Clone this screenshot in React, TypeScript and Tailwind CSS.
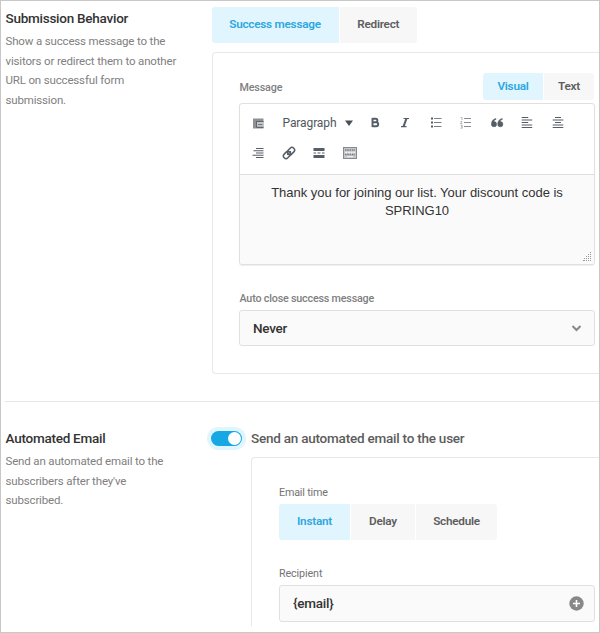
import type { ReactNode } from "react";

function Tabs({ items, className = "" }: { items: { label: string; width: string }[]; className?: string }) {
  return (
    <div className={`flex gap-px overflow-hidden rounded-[3px] text-[11.75px] font-semibold tracking-[-0.25px] ${className}`}>
      {items.map((t, i) => (
        <button
          key={t.label}
          className={`${t.width} h-full whitespace-nowrap ${i === 0 ? "bg-[#e1f5fe] text-[#2fa7e0]" : "bg-[#f7f7f7] text-[#5e5e5e]"}`}
        >
          {t.label}
        </button>
      ))}
    </div>
  );
}

function Intro({ title, lines }: { title: string; lines: string[] }) {
  return (
    <div className="w-[206px] shrink-0 pt-px pl-[4.5px]">
      <h2 className="h-[20px] text-[13.5px] leading-[20px] font-medium tracking-[-0.25px] whitespace-nowrap text-[#333]">{title}</h2>
      <p className="mt-[4px] text-[11.5px] leading-[19.7px] tracking-[-0.16px] whitespace-nowrap text-[#808080]">
        {lines.map((l) => (
          <span key={l} className="block">{l}</span>
        ))}
      </p>
    </div>
  );
}

function Icon({ children }: { children: ReactNode }) {
  return (
    <span className="flex h-[30px] w-[30.5px] items-center justify-center">
      <svg width="14" height="14" viewBox="0 0 14 14" fill="none" stroke="#555d66" strokeWidth="1.3">
        {children}
      </svg>
    </span>
  );
}

function Editor() {
  return (
    <div className="mt-[3px] flex h-[162px] w-[356px] flex-col rounded-[3px] border border-[#e0e0e0] shadow-[0_1px_1px_#eee]">
      <div className="h-[71px] border-b border-[#dedede] pt-[4px] pl-[3px]">
        <div className="flex">
          <Icon>
            <path d="M2 2.500h10.500v10H2z" fill="#8d9095" stroke="none" />
            <path d="M6 6h6.500v4.500H6z" fill="#c4c6c8" stroke="none" />
            <path d="M5.500 5v6.500h7M5.500 5.500h7" stroke="#62666c" strokeWidth="1" />
            <path d="M7 8.500h4.500" stroke="#777b80" strokeWidth="1" />
          </Icon>
          <div className="mr-[3px] ml-[3px] flex h-[30px] w-[80px] items-center justify-between pr-[4px] pl-[6px] text-[12px] tracking-[-0.1px] text-[#50575e]">
            <span>Paragraph</span>
            <svg width="8" height="6" viewBox="0 0 8 6"><path d="M0 .5h8L4 6z" fill="#4a5058" /></svg>
          </div>
          <Icon><path d="M4.500 2v9M4.500 2.800h3.200a1.600 1.600 0 0 1 0 3.400H4.500M4.500 6.300h3.700a2 2 0 0 1 0 4H4.500" strokeWidth="1.900" /></Icon>
          <Icon><path d="M5.500 2.500h5.500M3 10.700h5.500" strokeWidth="1.200" /><path d="M8.500 2.500l-3 8.200" strokeWidth="2" /></Icon>
          <Icon><path d="M5 2.500h7.500M5 6.500h7.500M5 10.500h7.500" stroke="#7b8087" strokeWidth="1" /><path d="M2 2.500h2M2 6.500h2M2 10.500h2" strokeWidth="2" /></Icon>
          <Icon><path d="M5 2.500h7M5 6.500h7M5 10.500h7" stroke="#8a8e94" strokeWidth="1" /><path d="M1.700 1.500h1.300v2.500M1.500 5.500h1.500L1.500 7.500H3.300M1.500 9.200h1.700v3H1.500M2 10.700h1" stroke="#a0a3a8" strokeWidth=".8" /></Icon>
          <Icon><path d="M6 2.500C3 3 1.400 5.200 1.400 8.200a2.600 2.600 0 1 0 2.600-2.600C4 4.500 4.700 3.700 6 3.500zM12.300 2.500C9.300 3 7.700 5.200 7.700 8.200a2.600 2.600 0 1 0 2.600-2.600C10.300 4.500 11 3.700 12.300 3.500z" fill="#555d66" stroke="#555d66" strokeWidth=".5" /></Icon>
          <Icon><path d="M1.700 1.500h6.500M1.700 4h10.500M1.700 6.500h6.500M1.700 9h10.500M1.700 11.500h10.500" strokeWidth="1.200" /></Icon>
          <Icon><path d="M4 1.500h6M1.700 4h10.600M4 6.500h6M1.700 9h10.600M1.700 11.500h10.600" strokeWidth="1.200" /></Icon>
        </div>
        <div className="flex">
          <Icon><path d="M5 2.500h7.500M2.500 4.700h10M5 7h7.500M1.500 9.200h11M5 11.500h7.500" strokeWidth="1.150" /></Icon>
          <Icon>
            <g transform="rotate(-45 7 7)">
              <rect x=".2" y="4.400" width="8" height="5.200" rx="2.600" strokeWidth="1.500" />
              <rect x="5.800" y="4.400" width="8" height="5.200" rx="2.600" strokeWidth="1.500" />
              <path d="M4.500 7h5" />
            </g>
          </Icon>
          <Icon>
            <path d="M1.500 3.500h11M1.500 10.500h11" strokeWidth="3.200" />
            <path d="M1.500 7h2.500M5.500 7h3M10 7h2.500" strokeWidth="1.200" />
          </Icon>
          <Icon>
            <rect x=".5" y="1.500" width="13" height="11" fill="#c6c8cb" stroke="#858990" strokeWidth="1" />
            <path d="M2 4h10" stroke="#777c83" strokeDasharray="1.500 .8" />
            <path d="M2 6.500h10" strokeDasharray="2 .8" stroke="#f3f3f3" />
            <path d="M2 8.500h10" stroke="#777c83" strokeDasharray="1.500 .8" />
            <path d="M4 10.700h6" stroke="#fff" strokeWidth=".8" />
          </Icon>
        </div>
      </div>
      <div className="relative flex-1 rounded-b-[3px] bg-[#fafafa] pt-[9px] text-center font-['Liberation_Sans',Arial,sans-serif] text-[13px] leading-[18px] tracking-[-0.02px] text-[#333]">
        <p className="whitespace-nowrap">Thank you for joining our list. Your discount code is</p>
        <p>SPRING10</p>
        <svg className="absolute right-[2px] bottom-[3px]" width="9" height="9" viewBox="0 0 9 9" fill="#999">
          <path d="M7 0h1v1h-1zM5 2h1v1h-1zM7 2h1v1h-1zM3 4h1v1h-1zM5 4h1v1h-1zM7 4h1v1h-1zM1 6h1v1h-1zM3 6h1v1h-1zM5 6h1v1h-1zM7 6h1v1h-1zM0 8h1v1h-1zM1 8h1v1h-1zM3 8h1v1h-1zM5 8h1v1h-1zM7 8h1v1h-1z" />
        </svg>
      </div>
    </div>
  );
}

export default function App() {
  return (
    <main className="h-[633px] w-[600px] overflow-hidden border border-[#c8c8c8] bg-white font-[Roboto,sans-serif]">
      <section className="flex h-[400px] pt-[6px]">
        <Intro
          title="Submission Behavior"
          lines={[
            "Show a success message to the",
            "visitors or redirect them to another",
            "URL on successful form",
            "submission.",
          ]}
        />
        <div className="flex-1 pl-[4.5px]">
          <Tabs className="h-[36px] w-[205.5px]" items={[{ label: "Success message", width: "w-[127px]" }, { label: "Redirect", width: "flex-1" }]} />
          <div className="mt-[9px] h-[322px] rounded-l-[4px] border border-r-0 border-[#e8e8e8] pt-[20px] pl-[26.5px]">
            <div className="flex h-[27px] w-[355px] items-center justify-between">
              <label className="mt-[3px] pl-[0.5px] text-[10.75px] font-medium tracking-[-0.15px] text-[#808080]">Message</label>
              <Tabs className="h-[27px] w-[111px]" items={[{ label: "Visual", width: "w-[60px]" }, { label: "Text", width: "flex-1" }]} />
            </div>
            <Editor />
            <label className="mt-[26px] block h-[16px] pl-[0.5px] text-[10.75px] leading-[16px] font-medium tracking-[-0.2px] text-[#808080]">Auto close success message</label>
            <div className="mt-[3px] flex h-[36px] w-[356px] items-center justify-between rounded-[3px] border border-[#e0e0e0] bg-[#fafafa] pr-[12px] pl-[13px] text-[13.5px] font-medium tracking-[-0.25px] text-[#333]">
              <span>Never</span>
              <svg width="11" height="8" viewBox="0 0 11 8"><path d="M1.500 2l4 4 4-4" fill="none" stroke="#888" strokeWidth="2" /></svg>
            </div>
          </div>
        </div>
      </section>
      <hr className="ml-[4px] border-[#e6e6e6]" />
      <section className="flex h-[224px] pt-[25px]">
        <Intro
          title="Automated Email"
          lines={["Send an automated email to the", "subscribers after they've", "subscribed."]}
        />
        <div className="flex-1">
          <div className="flex h-[23px] items-center">
            <span className="flex h-[23px] w-[39px] items-center justify-center rounded-full bg-[#e1f5fe]">
              <span className="flex h-[15px] w-[31px] items-center justify-end rounded-full bg-[#17a8e3] pr-px">
                <span className="h-[13px] w-[13px] rounded-full bg-white" />
              </span>
            </span>
            <span className="ml-[5px] text-[13.5px] font-medium tracking-[-0.23px] whitespace-nowrap text-[#5c5c5c]">Send an automated email to the user</span>
          </div>
          <div className="mt-[7px] ml-[44px] h-[169px] rounded-tl-[4px] border-t border-l border-[#e8e8e8] pt-[27px] pl-[27px]">
            <label className="block h-[16px] text-[10.75px] leading-[16px] tracking-[-0.18px] text-[#747474]">Email time</label>
            <Tabs className="mt-[3px] h-[36px] w-[218px]" items={[{ label: "Instant", width: "w-[71px]" }, { label: "Delay", width: "w-[64px]" }, { label: "Schedule", width: "flex-1" }]} />
            <label className="mt-[26px] block h-[16px] text-[10.75px] leading-[16px] tracking-[-0.12px] text-[#747474]">Recipient</label>
            <div className="mt-[3px] flex h-[37px] w-[316px] items-center justify-between rounded-[3px] border border-[#e0e0e0] bg-[#fafafa] pr-[10px] pl-[13px] text-[13.5px] font-medium tracking-[-0.25px] text-[#333]">
              <span>{"{email}"}</span>
              <svg width="15" height="15" viewBox="0 0 15 15"><circle cx="7.500" cy="7.500" r="7.200" fill="#888" /><path d="M7.500 4v7M4 7.500h7" stroke="#fff" strokeWidth="1.600" /></svg>
            </div>
          </div>
        </div>
      </section>
    </main>
  );
}
